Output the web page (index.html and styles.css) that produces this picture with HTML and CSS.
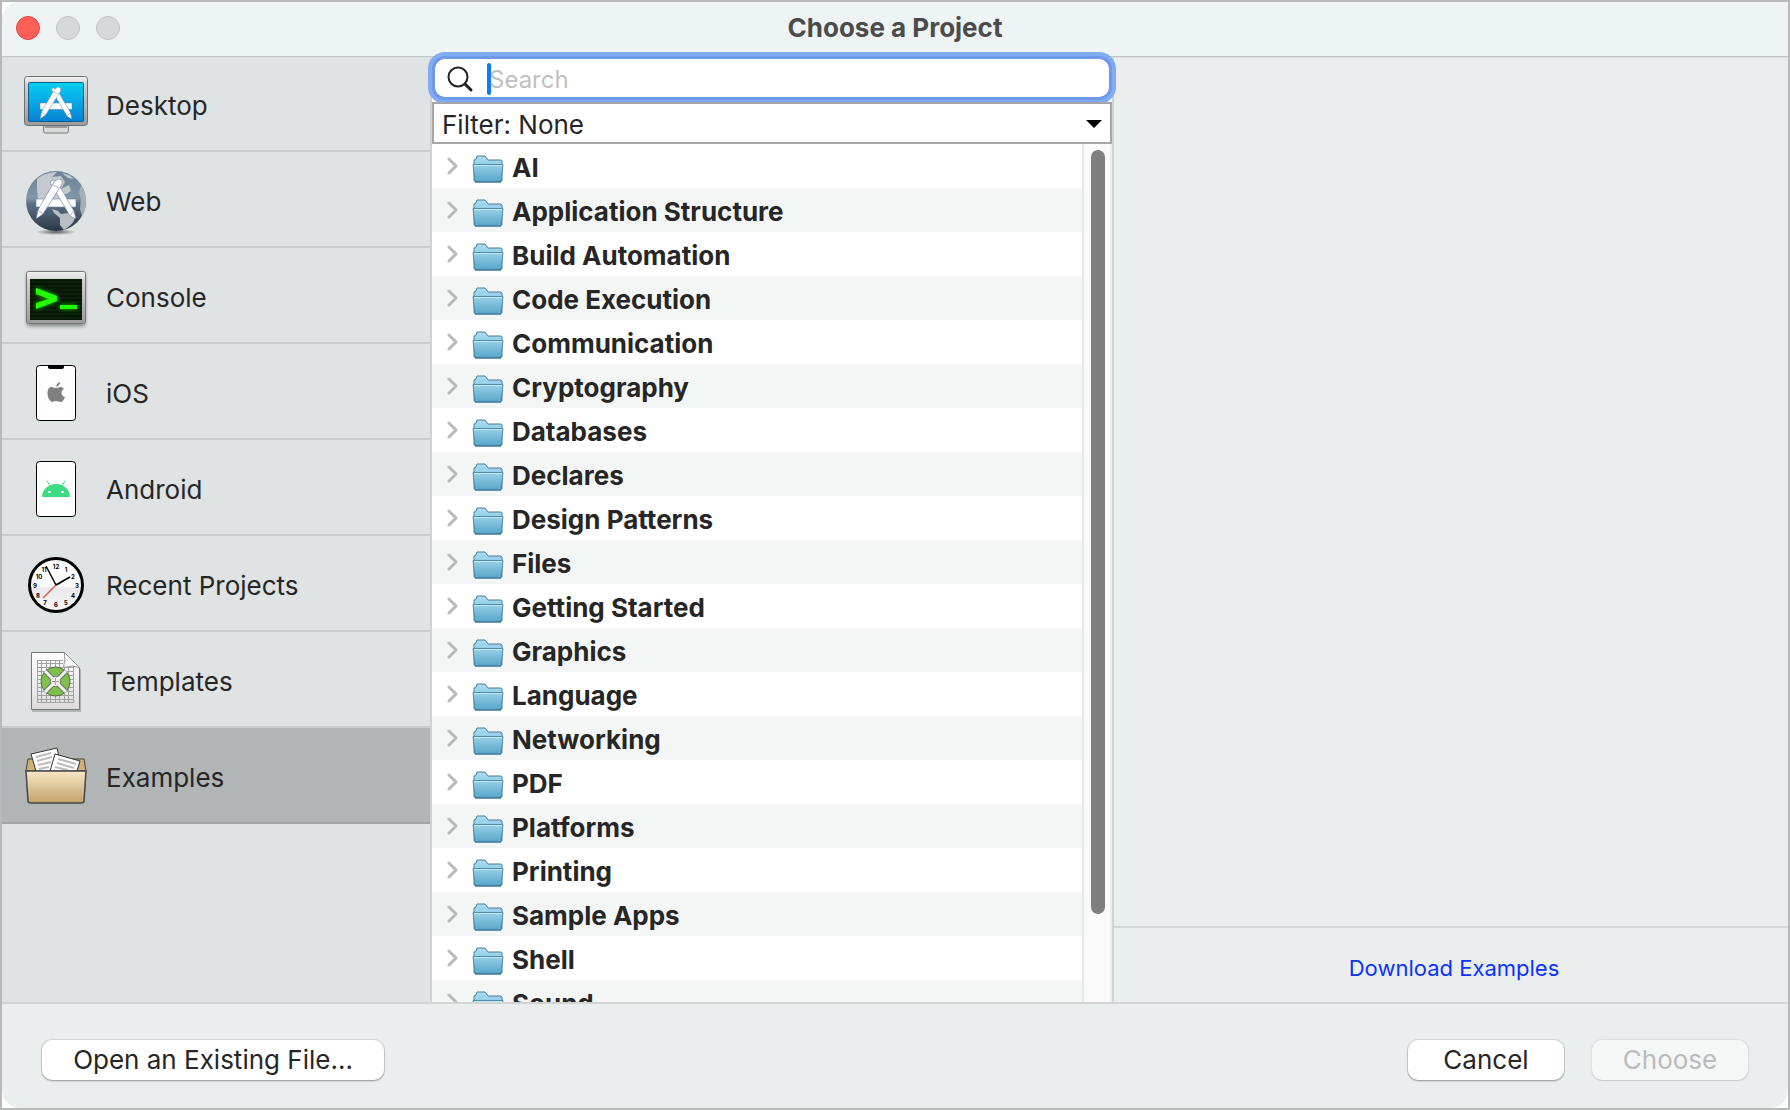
FILE: index.html
```
<!DOCTYPE html>
<html lang="en">
<head>
    <meta charset="UTF-8">
    <meta name="viewport" content="width=device-width, initial-scale=1.0">
    <title>Choose a Project</title>
    <link rel="stylesheet" href="styles.css">
</head>
<body>
    <!-- shared drawings -->
    <svg class="defs" width="0" height="0" aria-hidden="true">
        <defs>
            <linearGradient id="folderBack" x1="0" y1="0" x2="0" y2="1">
                <stop offset="0" stop-color="#a9dcf2"/>
                <stop offset="1" stop-color="#6db4d3"/>
            </linearGradient>
            <linearGradient id="folderFront" x1="0" y1="0" x2="0" y2="1">
                <stop offset="0" stop-color="#99cfe6"/>
                <stop offset="1" stop-color="#57a5c9"/>
            </linearGradient>
            <linearGradient id="metal" x1="0" y1="0" x2="0" y2="1">
                <stop offset="0" stop-color="#f2f2f2"/>
                <stop offset="0.2" stop-color="#cfcfcf"/>
                <stop offset="1" stop-color="#9b9b9b"/>
            </linearGradient>
            <linearGradient id="screen" x1="0" y1="0" x2="0" y2="1">
                <stop offset="0" stop-color="#06d0f3"/>
                <stop offset="1" stop-color="#0680d3"/>
            </linearGradient>
            <linearGradient id="globe" x1="0" y1="0" x2="0" y2="1">
                <stop offset="0" stop-color="#6b8096"/>
                <stop offset="0.45" stop-color="#8395a8"/>
                <stop offset="0.55" stop-color="#5c7086"/>
                <stop offset="1" stop-color="#2b3744"/>
            </linearGradient>
            <linearGradient id="paper" x1="0" y1="0" x2="0" y2="1">
                <stop offset="0" stop-color="#ffffff"/>
                <stop offset="1" stop-color="#dcdcdc"/>
            </linearGradient>
            <linearGradient id="box" x1="0" y1="0" x2="0" y2="1">
                <stop offset="0" stop-color="#f7e7c4"/>
                <stop offset="1" stop-color="#c2a26a"/>
            </linearGradient>
            <linearGradient id="face" x1="0" y1="0" x2="0" y2="1">
                <stop offset="0.52" stop-color="#ffffff"/>
                <stop offset="0.56" stop-color="#ebe9eb"/>
                <stop offset="1" stop-color="#f8f7f8"/>
            </linearGradient>
            <radialGradient id="ground">
                <stop offset="0" stop-color="#000" stop-opacity="0.6"/>
                <stop offset="1" stop-color="#000" stop-opacity="0"/>
            </radialGradient>
            <filter id="glow" x="-30%" y="-30%" width="160%" height="160%">
                <feGaussianBlur stdDeviation="2"/>
            </filter>
            <symbol id="folder" viewBox="0 0 32 30">
                <path d="M2 27V6l2-1 1-3h8l3 4h13l1 1v20z" fill="url(#folderBack)" stroke="#4f7f96"/>
                <path d="M1 10.500h30L29 28H3z" fill="url(#folderFront)" stroke="#4e8eab"/>
                <path d="M2 11.500h28" stroke="#c6e7f5"/>
                <path d="M3 28h26" stroke="#2f6f8d"/>
            </symbol>
            <symbol id="chevron" viewBox="0 0 12 18">
                <path d="M2 2l7 7-7 7" fill="none" stroke="#b8b8b8" stroke-width="3" stroke-linecap="round" stroke-linejoin="round"/>
            </symbol>
            <symbol id="tools" viewBox="0 0 40 40">
                <g stroke="#6a7f94" stroke-width="0.600">
                    <path d="M0 20h40v8H0z" fill="#fff"/>
                    <path d="M14 3l3-2 3 2 3 3 15 26 2 8-6-3L17 8z" fill="#fff"/>
                    <path d="M26 5V1l-4-1-4 3L2 31l-2 9 7-5z" fill="#fff"/>
                    <path d="M17 6l6 3M2 31l5 4M34 36l4-4" fill="none"/>
                </g>
            </symbol>
        </defs>
    </svg>

    <div class="dialog">
        <header class="titlebar">
            <div class="lights">
                <button class="light close" aria-label="Close"></button>
                <button class="light" aria-label="Minimize" disabled></button>
                <button class="light" aria-label="Zoom" disabled></button>
            </div>
            <h1>Choose a Project</h1>
        </header>

        <main class="content">
            <nav class="sidebar">
                <button class="category">
                    <svg width="64" height="64" viewBox="0 0 64 64">
                        <rect x="19.500" y="50" width="25" height="8" rx="2" fill="#d9d9d9" stroke="#777"/>
                        <path d="M21 52h22" stroke="#999" stroke-width="2"/>
                        <rect x="0.500" y="1.500" width="63" height="49" rx="3" fill="url(#metal)" stroke="#6f6f6f"/>
                        <rect x="4.500" y="7.500" width="55" height="39" rx="1" fill="url(#screen)" stroke="#0b5f92"/>
                        <use href="#tools" x="16" y="12" width="32" height="32"/>
                    </svg>
                    Desktop
                </button>
                <button class="category">
                    <svg width="64" height="64" viewBox="0 0 64 64">
                        <ellipse cx="32" cy="61" rx="20" ry="3" fill="url(#ground)"/>
                        <circle cx="32" cy="30" r="30" fill="url(#globe)"/>
                        <path d="M13 8c6-5 13-7 20-7l-5 5 9-1 4 6-4 7 8-4 2 6-7 4-5 8-7 4-6-2-3-3-5-2-1-12z" fill="#c4c9cd"/>
                        <path d="M38 2c5 1 9 3 12 6l-6-1z" fill="#c4c9cd"/>
                        <path d="M28 38l6 2 3 3 8-1 6 4c-1 6-5 9-11 13l-4-5v-7l-6-5z" fill="#b9bfc4"/>
                        <path d="M57 14c4 6 5 11 5 16 0 7-2 12-4 15l-2-7 1-10-2-6z" fill="#a6afb8"/>
                        <use href="#tools" x="12" y="8" width="40" height="40"/>
                    </svg>
                    Web
                </button>
                <button class="category">
                    <svg width="64" height="64" viewBox="0 0 64 64">
                        <rect x="3" y="6" width="58" height="53" rx="2" fill="#000" opacity="0.450" filter="url(#glow)"/>
                        <rect x="2.500" y="4.500" width="59" height="52" rx="2" fill="url(#metal)" stroke="#757575"/>
                        <rect x="6" y="12" width="52" height="41" fill="#061504"/>
                        <path d="M6 15h52M6 19h52M6 23h52M6 27h52M6 31h52M6 35h52M6 39h52M6 43h52M6 47h52M6 51h52" stroke="#0c2e08"/>
                        <path d="M12 21l21 8v5l-21 8v-6l13-4-13-5zM36 38h17v4H36z" fill="#1ccf00" filter="url(#glow)"/>
                        <path d="M12 21l21 8v5l-21 8v-6l13-4-13-5zM36 38h17v4H36z" fill="#25fb00"/>
                    </svg>
                    Console
                </button>
                <button class="category">
                    <svg width="64" height="64" viewBox="0 0 64 64">
                        <rect x="12.500" y="2.500" width="39" height="55" rx="3" fill="#fff" stroke="#000"/>
                        <path d="M24 2h16v2q0 2-2 2H27q-3 0-3-2z" fill="#000"/>
                        <path transform="translate(23.500 19)" d="M8.500 5C9 2 10 1 12.500 0c0 2-1 4-4 5zM8.500 6c2 0 3-1 5-1 1 0 2 1 3 2-4 2-3 7 1 8-1 3-3 5-4 5-2 0-3-1-5-1s-3 1-4 1C1 18 0 14 0 11c0-4 2-6 4-6 2 0 3 1 4.500 1z" fill="#808080"/>
                    </svg>
                    iOS
                </button>
                <button class="category">
                    <svg width="64" height="64" viewBox="0 0 64 64">
                        <rect x="12.500" y="2.500" width="39" height="55" rx="3" fill="#fff" stroke="#000"/>
                        <path d="M18 38a14 13 0 0 1 28 0z" fill="#3ddc84"/>
                        <path d="M23 22l3 5M41 22l-3 5" stroke="#3ddc84" stroke-linecap="round"/>
                        <circle cx="25.500" cy="33" r="1.300" fill="#fff"/>
                        <circle cx="38.500" cy="33" r="1.300" fill="#fff"/>
                    </svg>
                    Android
                </button>
                <button class="category">
                    <svg width="64" height="64" viewBox="0 0 64 64">
                        <circle cx="32" cy="30" r="26.500" fill="url(#face)" stroke="#000" stroke-width="3"/>
                        <g class="numerals">
                            <text x="32" y="14">12</text>
                            <text x="42" y="17">1</text>
                            <text x="49" y="24">2</text>
                            <text x="53" y="33">3</text>
                            <text x="49" y="43">4</text>
                            <text x="42" y="50">5</text>
                            <text x="32" y="52">6</text>
                            <text x="21" y="50">7</text>
                            <text x="14" y="43">8</text>
                            <text x="11" y="33">9</text>
                            <text x="15" y="24">10</text>
                            <text x="20" y="17">11</text>
                        </g>
                        <path d="M32 30L19 43" stroke="#dc5b4b" stroke-width="1.500"/>
                        <path d="M32 30L22 11" stroke="#000" stroke-width="1.500"/>
                        <path d="M32 30l14-8" stroke="#000" stroke-width="2"/>
                    </svg>
                    Recent Projects
                </button>
                <button class="category">
                    <svg width="64" height="64" viewBox="0 0 64 64">
                        <path d="M8 60h48V18" fill="none" stroke="#000" stroke-opacity="0.200" stroke-width="2"/>
                        <path d="M7.500 1.500h33l15 15v42h-48z" fill="url(#paper)" stroke="#777"/>
                        <path d="M13 9.500h26M13 12.500h26M13 16.500h36M13 20.500h37M13 24.500h37M13 28.500h37M13 32.500h37M13 36.500h37M13 40.500h37M13 44.500h37M13 48.500h37M13 51.500h37M13.500 9v43M17.500 9v43M22.500 9v43M26.500 9v43M31.500 9v43M35.500 9v43M40.500 16v36M44.500 16v36M49.500 16v36" stroke="#a2a2a2" fill="none"/>
                        <circle cx="31.500" cy="30.500" r="14.500" fill="#80bf4b" stroke="#5c6b50"/>
                        <path d="M21 20l21 21M42 20L21 41" stroke="#6b7a60" stroke-width="5"/>
                        <circle cx="31.500" cy="30.500" r="5" fill="#f2f2f2" stroke="#6b7a60"/>
                        <path d="M21 20l21 21M42 20L21 41" stroke="#f2f2f2" stroke-width="3"/>
                        <path d="M28 30.500h7M31.500 27v7" stroke="#a2a2a2"/>
                        <path d="M40.500 1.500l15 15q-7-3-16 0 2-8 1-15z" fill="#fafafa" stroke="#999"/>
                    </svg>
                    Templates
                </button>
                <button class="category selected">
                    <svg width="64" height="64" viewBox="0 0 64 64">
                        <path d="M4 12h56l2 12H2z" fill="#cdb074" stroke="#444"/>
                        <path d="M7 7l26-6 5 23H12z" fill="#fff" stroke="#333"/>
                        <path d="M12 10l15-4M13 14l15-4M14 18l13-3M15 22l10-2" stroke="#bbb" stroke-width="2"/>
                        <path d="M31 7l25 7-3 10H26z" fill="#fff" stroke="#333"/>
                        <path d="M34 12l18 5M33 16l17 5M31 20l13 3" stroke="#bbb" stroke-width="2"/>
                        <path d="M2 24h60l-2 30q0 2-3 2H7q-3 0-3-2z" fill="url(#box)" stroke="#444" stroke-width="1.500"/>
                    </svg>
                    Examples
                </button>
            </nav>

            <section class="browser">
                <div class="search">
                    <svg width="28" height="28" viewBox="0 0 28 28">
                        <circle cx="12" cy="12" r="9.500" fill="none" stroke="#222" stroke-width="2"/>
                        <path d="M19 19l6 6" stroke="#222" stroke-width="3" stroke-linecap="round"/>
                    </svg>
                    <span class="caret"></span>
                    <input type="search" placeholder="Search" aria-label="Search">
                </div>
                <div class="filter">
                    <select aria-label="Filter">
                        <option>Filter: None</option>
                    </select>
                    <svg class="arrow" width="16" height="8" viewBox="0 0 16 8"><path d="M0 0h16L8 8z"/></svg>
                </div>
                <div class="list">
                    <ul class="folders">
                        <li><svg class="chevron"><use href="#chevron"/></svg><svg class="folder"><use href="#folder"/></svg>AI</li>
                        <li><svg class="chevron"><use href="#chevron"/></svg><svg class="folder"><use href="#folder"/></svg>Application Structure</li>
                        <li><svg class="chevron"><use href="#chevron"/></svg><svg class="folder"><use href="#folder"/></svg>Build Automation</li>
                        <li><svg class="chevron"><use href="#chevron"/></svg><svg class="folder"><use href="#folder"/></svg>Code Execution</li>
                        <li><svg class="chevron"><use href="#chevron"/></svg><svg class="folder"><use href="#folder"/></svg>Communication</li>
                        <li><svg class="chevron"><use href="#chevron"/></svg><svg class="folder"><use href="#folder"/></svg>Cryptography</li>
                        <li><svg class="chevron"><use href="#chevron"/></svg><svg class="folder"><use href="#folder"/></svg>Databases</li>
                        <li><svg class="chevron"><use href="#chevron"/></svg><svg class="folder"><use href="#folder"/></svg>Declares</li>
                        <li><svg class="chevron"><use href="#chevron"/></svg><svg class="folder"><use href="#folder"/></svg>Design Patterns</li>
                        <li><svg class="chevron"><use href="#chevron"/></svg><svg class="folder"><use href="#folder"/></svg>Files</li>
                        <li><svg class="chevron"><use href="#chevron"/></svg><svg class="folder"><use href="#folder"/></svg>Getting Started</li>
                        <li><svg class="chevron"><use href="#chevron"/></svg><svg class="folder"><use href="#folder"/></svg>Graphics</li>
                        <li><svg class="chevron"><use href="#chevron"/></svg><svg class="folder"><use href="#folder"/></svg>Language</li>
                        <li><svg class="chevron"><use href="#chevron"/></svg><svg class="folder"><use href="#folder"/></svg>Networking</li>
                        <li><svg class="chevron"><use href="#chevron"/></svg><svg class="folder"><use href="#folder"/></svg>PDF</li>
                        <li><svg class="chevron"><use href="#chevron"/></svg><svg class="folder"><use href="#folder"/></svg>Platforms</li>
                        <li><svg class="chevron"><use href="#chevron"/></svg><svg class="folder"><use href="#folder"/></svg>Printing</li>
                        <li><svg class="chevron"><use href="#chevron"/></svg><svg class="folder"><use href="#folder"/></svg>Sample Apps</li>
                        <li><svg class="chevron"><use href="#chevron"/></svg><svg class="folder"><use href="#folder"/></svg>Shell</li>
                        <li><svg class="chevron"><use href="#chevron"/></svg><svg class="folder"><use href="#folder"/></svg>Sound</li>
                    </ul>
                    <div class="scrollbar"><div class="thumb"></div></div>
                </div>
            </section>

            <section class="details">
                <div class="preview"></div>
                <div class="download"><a href="#">Download Examples</a></div>
            </section>
        </main>

        <footer class="actions">
            <button class="btn open">Open an Existing File...</button>
            <button class="btn">Cancel</button>
            <button class="btn" disabled>Choose</button>
        </footer>
    </div>
</body>
</html>
```

FILE: styles.css
```
* {
    box-sizing: border-box;
}

body {
    margin: 0;
    font-family: Inter, "Liberation Sans", sans-serif;
    font-size: 26px;
    color: #262626;
    background-color: white;
}

button,
input,
select {
    font: inherit;
    color: inherit;
}

svg {
    flex-shrink: 0;
}

.defs {
    position: absolute;
}

.dialog {
    display: flex;
    flex-direction: column;
    height: 100vh;
    border: 2px solid #b8bab9;
}

/* title bar */
.titlebar {
    display: grid;
    grid-template-columns: 1fr auto 1fr;
    align-items: center;
    height: 54px;
    flex-shrink: 0;
    padding: 0 14px 2px;
    background-color: #eef3f3;
    border-radius: 18px 0 0 0;
    box-shadow: 0 1px #c3c6c6, 0 2px #dadddd;
    position: relative;
}

.titlebar h1 {
    margin: 0 0 2px;
    font-size: 26px;
    font-weight: 700;
    color: #4a4c4c;
}

.lights {
    display: flex;
    gap: 16px;
}

.light {
    width: 24px;
    height: 24px;
    padding: 0;
    border: 1px solid #bfc3c3;
    border-radius: 50%;
    background-color: #d5d9d9;
}

.light.close {
    border-color: #e2483f;
    background-color: #ff5f57;
}

.content {
    display: flex;
    flex: 1;
    min-height: 0;
}

/* categories */
.sidebar {
    width: 430px;
    flex-shrink: 0;
    background-color: #dfe3e4;
    border-right: 2px solid #cfd1d1;
}

.category {
    display: flex;
    align-items: center;
    gap: 18px;
    width: 100%;
    height: 96px;
    padding: 4px 22px 0;
    border: none;
    border-bottom: 2px solid #c8cbcc;
    background: none;
    text-align: left;
}

.category svg {
    margin-top: 4px;
}

.category.selected {
    background-color: #b1b5b6;
    border-bottom-color: #a1a5a6;
}

.numerals {
    font-size: 6px;
    font-weight: 700;
    text-anchor: middle;
    fill: black;
}

/* examples browser */
.browser {
    display: flex;
    flex-direction: column;
    width: 682px;
    flex-shrink: 0;
    border-right: 2px solid #d2d4d4;
    background-color: white;
}

.search {
    display: flex;
    align-items: center;
    height: 38px;
    margin: 3px 3px 5px;
    padding: 2px 11px 0;
    border-radius: 10px;
    background-color: white;
    box-shadow: 0 0 0 3px #7299e8, 0 0 0 7px #82abf6;
    position: relative;
}

.caret {
    width: 4px;
    height: 32px;
    margin-left: 13px;
    border-radius: 2px;
    background-color: #0a7aff;
}

.search input {
    flex: 1;
    margin-left: -2px;
    padding: 0;
    border: none;
    outline: none;
    background: none;
    font-size: 24px;
}

.search input::placeholder {
    color: #bfbfbf;
}

.filter {
    position: relative;
    height: 42px;
    flex-shrink: 0;
}

.filter select {
    appearance: none;
    width: 100%;
    height: 100%;
    padding: 2px 8px 0;
    border: 2px solid #a5a5a5;
    border-radius: 0;
    background-color: white;
}

.filter .arrow {
    position: absolute;
    top: 18px;
    right: 10px;
    pointer-events: none;
}

.list {
    display: flex;
    flex: 1;
    min-height: 0;
    overflow: hidden;
}

.folders {
    flex: 1;
    margin: 0;
    padding: 0;
    list-style: none;
    font-weight: 700;
}

.folders li {
    display: flex;
    align-items: center;
    height: 44px;
    padding-top: 2px;
    padding-left: 15px;
}

.folders li:nth-child(even) {
    background-color: #f4f5f5;
}

.chevron {
    width: 12px;
    height: 18px;
    margin-right: 13px;
    margin-bottom: 2px;
}

.folder {
    width: 32px;
    height: 30px;
    margin-top: 4px;
    margin-right: 8px;
}

.scrollbar {
    width: 30px;
    padding: 6px 5px 6px 7px;
    border-left: 2px solid #e8e8e8;
    border-right: 2px solid #ededed;
    background-color: #fafafa;
}

.thumb {
    height: 90%;
    min-height: 764px;
    border-radius: 8px;
    background-color: #7f7f7f;
}

/* right side */
.details {
    display: flex;
    flex-direction: column;
    flex: 1;
    background-color: #eaeeef;
}

.preview {
    flex: 1;
}

.download {
    display: flex;
    align-items: center;
    justify-content: center;
    height: 76px;
    padding: 6px 0 0 6px;
    border-top: 2px solid #d4d7d8;
}

.download a {
    font-size: 22px;
    color: #0a33ff;
    text-decoration: none;
}

/* bottom bar */
.actions {
    display: flex;
    align-items: center;
    gap: 28px;
    height: 106px;
    flex-shrink: 0;
    padding: 8px 40px 0;
    border-top: 2px solid #d2d4d4;
    border-radius: 0 0 18px 18px;
    background-color: #eaeeef;
}

.btn {
    width: 156px;
    height: 40px;
    padding: 0 0 2px;
    border: none;
    border-radius: 10px;
    background-color: white;
    box-shadow: 0 0 1px 1px rgba(0, 0, 0, 0.1), 0 1px 2px rgba(0, 0, 0, 0.3);
}

.btn:disabled {
    color: #b9bcbc;
    background-color: #f4f7f6;
    box-shadow: 0 0 1px 1px rgba(0, 0, 0, 0.06), 0 1px 1px rgba(0, 0, 0, 0.1);
}

.btn.open {
    width: 342px;
    margin-right: auto;
}
```
